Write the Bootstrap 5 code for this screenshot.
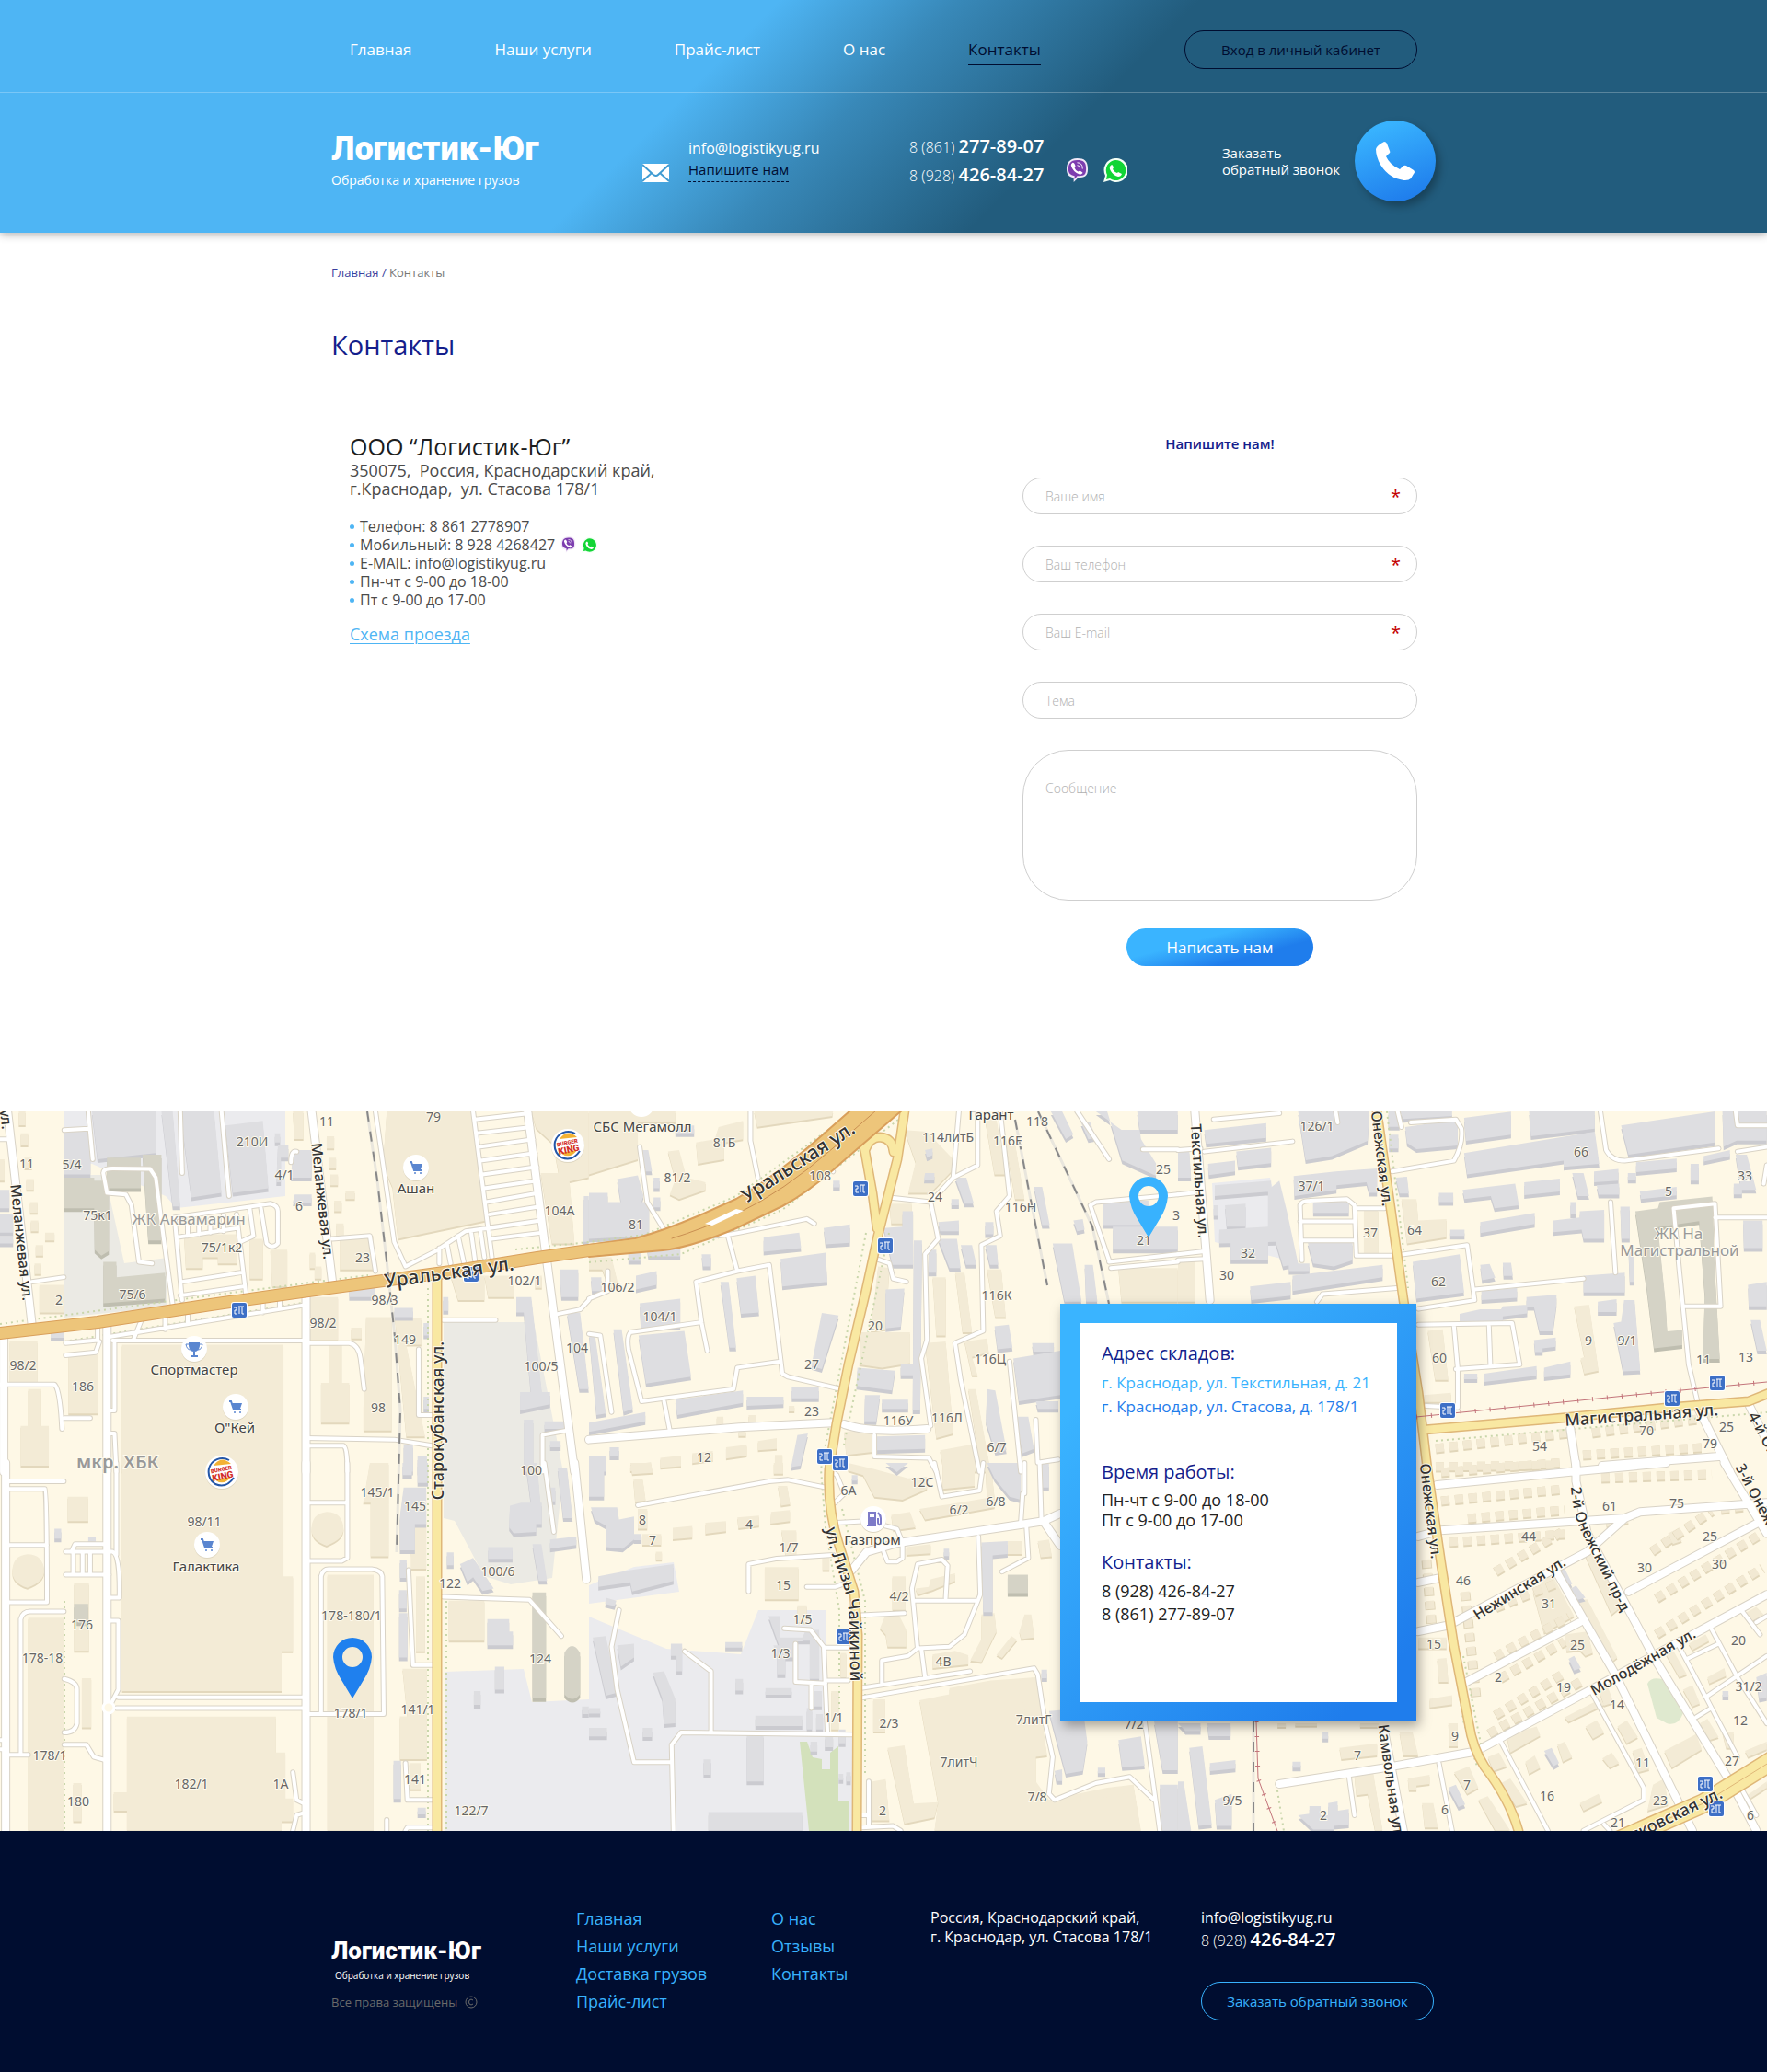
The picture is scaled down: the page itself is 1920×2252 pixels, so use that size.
<!DOCTYPE html>
<html lang="ru">
<head>
<meta charset="utf-8">
<meta name="viewport" content="width=device-width, initial-scale=1">
<title>Контакты — Логистик-Юг</title>
<link href="https://cdn.jsdelivr.net/npm/bootstrap@5.3.0/dist/css/bootstrap.min.css" rel="stylesheet">
<style>
:root{--sky:#4eb5f4;--azure:#38b2fe;--blue:#1f7dec;--navy:#000d30;--ink:#141e8c}
body{font-family:"Open Sans","Noto Sans",sans-serif;font-size:16px;line-height:20px;color:#4b4b4b;background:#fff}
a{text-decoration:none}
.wrap{width:100%;max-width:1200px;margin:0 auto}
.t13{font-size:13px;line-height:22px}
.t18{font-size:18px}
.light{font-weight:300}
.medium{font-weight:500}
.brand-name{font-family:Roboto,"Open Sans",sans-serif;font-weight:900;font-size:36px;line-height:36px;color:#fff}
.brand-name.compact{font-size:26px;line-height:30px}

.site-head{background:linear-gradient(135deg,var(--sky) 39%,#3888b8 48%,#225c7d 60%);box-shadow:0 2px 9px rgba(0,0,0,.3);position:relative;color:#fff}
.head-top{height:101px;border-bottom:1px solid rgba(255,255,255,.25)}
.head-top .wrap{padding:7px 20px 0;height:100%}
.main-menu{gap:90px}
.main-menu a{color:#fff;font-size:17px;line-height:24px;padding:5px 0 4px;border-bottom:1px solid transparent}
.main-menu a.current{color:var(--navy);border-color:var(--navy)}
.pill{width:253px;height:42px;border-radius:21px;border:1px solid var(--navy);background:transparent;color:var(--navy);font-size:15px;padding:0}
.pill.sky{border-color:var(--azure);color:var(--azure)}
.head-low .wrap{padding:30px 0 34px}
.w-brand{width:338px}
.w-mail{width:290px;padding-bottom:3px}
.tagline{font-size:14px;line-height:22px;margin-top:5px}
.mail-lines a{display:block;line-height:22px;color:#fff}
.mail-lines .ask{color:var(--navy);font-size:15px;border-bottom:1px dashed var(--navy);line-height:25px;width:max-content}
.tel{line-height:29px;color:#fff;display:block}
.tel b{font-size:20px;font-weight:600}
.call-text{font-size:15px;line-height:18px}
.call-btn{width:88px;height:88px;border:0;border-radius:50%;background:linear-gradient(160deg,var(--azure) 15%,var(--blue) 90%);box-shadow:4px 5px 10px rgba(0,0,0,.3)}

.crumbs{padding-top:32px;color:#777}
.crumbs a{color:#3a3f9e}
h1{font-size:29px;line-height:36px;font-weight:400;color:var(--ink);margin:50px 0 76px}
.firm{font-size:25px;line-height:32px;font-weight:400;color:#1d1d1d;margin:0}
.facts{list-style:none;padding:0;margin:21px 0 15px}
.facts li{display:flex;align-items:center;gap:6px}
.facts li::before{content:"";width:5px;height:5px;border-radius:50%;background:var(--sky)}
.route{color:var(--sky);font-size:18px;line-height:24px;text-decoration:underline;text-decoration-thickness:1px;text-underline-offset:3px}
.page-main{padding-bottom:158px}
.page-cols{padding:0 20px}
.write{width:429px;gap:34px}
.write h2{font-size:15px;line-height:24px;font-weight:600;color:var(--ink);margin:1px 0 -9px}
.write .form-control{height:40px;border-radius:20px;border:1px solid #cfcfcf;padding:0 24px;font-size:14px}
.write .form-control::placeholder{color:#b0b0b0;opacity:1;font-weight:300}
.write textarea.form-control{height:164px;border-radius:50px;padding-top:31px;resize:none;line-height:20px}
.star{position:absolute;right:18px;top:9px;color:#c40000;font-size:20px;line-height:24px}
.send{width:203px;height:41px;border:0;border-radius:21px;color:#fff;font-size:17px;font-weight:500;margin-top:-4px;background:linear-gradient(165deg,#3ab4ff 35%,var(--blue) 70%)}

.map{min-height:782px;position:relative;overflow:hidden;background:#fef8e6}
.map-art{position:absolute;inset:0;width:100%;height:100%}
.map .wrap{position:relative;padding:209px 21px 119px}
.stores{width:387px;padding:21px;background:linear-gradient(135deg,#3ab4ff 15%,var(--blue) 90%);box-shadow:3px 5px 12px rgba(0,0,0,.35)}
.stores-in{background:#fff;min-height:412px;padding:20px 10px 20px 24px;color:#222}
.stores h2{font-size:20px;line-height:26px;font-weight:400;color:var(--ink);margin:0 0 6px}
.stores p{font-size:18px;line-height:22px}
.stores .loose{line-height:25px}
.stores .places{font-size:17px;line-height:26px;margin-bottom:45px}
.places a{color:#38b2fe}
.places a+br+a{color:var(--blue)}
.gap-md{margin-bottom:22px}

.site-foot{background:var(--navy);color:#fff;padding:80px 0 57px}
.site-foot .links a{color:var(--azure);font-size:18px;line-height:30px;display:block}
.f1{width:266px}.f2{width:212px}.f3{width:173px}.f4{width:294px}
.f4,.f5{padding-top:4px;line-height:21px}
.f1{padding-top:35px}
.mini{font-size:10px;line-height:16px;margin:4px 0 11px 4px}
.rights{color:#6a6a6a;font-size:13px}
.f5 .tel{line-height:26px}
.f5 .pill{margin-top:32px}

.map-art path,.map-art ellipse{vector-effect:non-scaling-stroke}
.roads{fill:none;stroke-linejoin:round;stroke-linecap:round}
.num text{font:14px "Noto Sans",sans-serif;fill:#666}
.poi text{font:15px "Noto Sans",sans-serif;fill:#444}
.area text{font:17px "Noto Sans",sans-serif;fill:#999}
.area .big{font-size:20px;font-weight:600}
.street text{font:500 16px "Noto Sans",sans-serif;fill:#333}
.street .big{font-size:21px}
.street .mid{font-size:18px}
.street .from-start{text-anchor:start}
.halo{text-anchor:middle;paint-order:stroke;stroke:#fffbee;stroke-width:2px;stroke-linejoin:round}
</style>
<script src="https://cdn.jsdelivr.net/npm/bootstrap@5.3.0/dist/js/bootstrap.bundle.min.js"></script>
</head>
<body>
<svg width="0" height="0" class="position-absolute" aria-hidden="true">
  <symbol id="viber" viewBox="0 0 26 27">
    <path d="M13 0C21 0 25 3 25 12S21 22 14 22L9 27V22C3 21 1 18 1 12S4 0 13 0z" fill="#f1e8f7"/>
    <path d="M13 2C20 2 23 4 23 12S20 20 13 20L10 24V20C5 19 3 17 3 12S5 2 13 2z" fill="#7d3daf"/>
    <path d="M8 5Q10 5 11 9L10 11Q11 14 14 15L16 14Q20 16 19 17 17 19 15 18 8 15 6 8 6 6 8 5z" fill="#fff"/>
    <path d="M13 5Q19 5 19 12M13 8Q16 8 16 11" fill="none" stroke="#fff" stroke-width="1"/>
  </symbol>
  <symbol id="whatsapp" viewBox="0 0 26 26">
    <path d="M13 0a13 13 0 1 1-6 24L0 26 2 19A13 13 0 0 1 13 0z" fill="#f3fff5"/>
    <path d="M13 2a11 11 0 1 1-6 20L3 23 4 18A11 11 0 0 1 13 2z" fill="#12d535"/>
    <path d="M9 7Q10 7 11 10L10 12Q12 15 15 16L16 15 20 17Q19 20 16 20 11 19 8 14 5 9 9 7z" fill="#fff"/>
  </symbol>
</svg>

<header class="site-head">
  <div class="head-top">
    <div class="wrap d-flex align-items-center justify-content-between">
      <nav class="main-menu d-flex" aria-label="Основное меню">
        <a href="#">Главная</a><a href="#">Наши услуги</a><a href="#">Прайс-лист</a><a href="#">О нас</a><a href="#" class="current" aria-current="page">Контакты</a>
      </nav>
      <button type="button" class="pill">Вход в личный кабинет</button>
    </div>
  </div>
  <div class="head-low">
    <div class="wrap d-flex align-items-center">
      <div class="w-brand">
        <div class="brand-name">Логистик-Юг</div>
        <div class="tagline">Обработка и хранение грузов</div>
      </div>
      <div class="w-mail d-flex align-items-end">
        <svg width="50" height="20" viewBox="0 0 50 20" aria-hidden="true"><rect width="29" height="20" rx="1" fill="#fff"/><path d="M0 1L12 12Q15 14 17 12L29 1M0 19L10 10M29 19L19 10" fill="none" stroke="#3f9bd2" stroke-width="2"/></svg>
        <div class="mail-lines">
          <a href="mailto:info@logistikyug.ru" class="medium">info@logistikyug.ru</a>
          <a href="#write" class="ask">Напишите нам</a>
        </div>
      </div>
      <div class="d-flex align-items-end">
        <div>
          <a href="tel:+78612778907" class="tel"><span class="light">8 (861)</span> <b>277-89-07</b></a>
          <a href="tel:+79284268427" class="tel"><span class="light">8 (928)</span> <b>426-84-27</b></a>
        </div>
        <div class="d-flex ms-4 mb-2 gap-3">
          <a href="#" aria-label="Viber"><svg class="d-block" width="25" height="26"><use href="#viber"/></svg></a>
          <a href="#" aria-label="WhatsApp"><svg class="d-block" width="26" height="26"><use href="#whatsapp"/></svg></a>
        </div>
      </div>
      <div class="d-flex align-items-center ms-auto gap-3">
        <div class="call-text">Заказать<br>обратный звонок</div>
        <button type="button" class="call-btn" aria-label="Заказать обратный звонок">
          <svg width="42" height="42" viewBox="0 0 42 42" aria-hidden="true"><path fill="#fff" d="M9 0Q11 0 12 2L15 10Q16 12 14 13L11 16Q15 25 26 30L29 27Q31 25 33 26L41 31Q43 33 41 35L38 40Q36 42 32 42Q15 41 5 25Q0 16 0 8Q1 4 9 0z"/></svg>
        </button>
      </div>
    </div>
  </div>
</header>

<main class="page-main">
  <div class="wrap">
    <nav class="crumbs t13" aria-label="Хлебные крошки"><a href="#">Главная /</a> <span>Контакты</span></nav>
    <h1>Контакты</h1>
    <div class="page-cols d-flex justify-content-between align-items-start">
      <section>
        <h2 class="firm">ООО “Логистик-Юг”</h2>
        <address class="t18 mb-0">350075,&nbsp; Россия, Краснодарский край,<br>г.Краснодар,&nbsp; ул. Стасова 178/1</address>
        <ul class="facts">
          <li>Телефон: 8 861 2778907</li>
          <li>Мобильный: 8 928 4268427
            <svg width="17" height="18" aria-hidden="true"><use href="#viber"/></svg>
            <svg width="17" height="17" aria-hidden="true"><use href="#whatsapp"/></svg></li>
          <li>E-MAIL: info@logistikyug.ru</li>
          <li>Пн-чт с 9-00 до 18-00</li>
          <li>Пт с 9-00 до 17-00</li>
        </ul>
        <a class="route" href="#map">Схема проезда</a>
      </section>
      <form id="write" class="write d-flex flex-column">
        <h2 class="text-center">Напишите нам!</h2>
        <div class="position-relative"><label class="visually-hidden" for="f-name">Ваше имя</label><input id="f-name" class="form-control" type="text" placeholder="Ваше имя" required><span class="star" aria-hidden="true">*</span></div>
        <div class="position-relative"><label class="visually-hidden" for="f-tel">Ваш телефон</label><input id="f-tel" class="form-control" type="tel" placeholder="Ваш телефон" required><span class="star" aria-hidden="true">*</span></div>
        <div class="position-relative"><label class="visually-hidden" for="f-mail">Ваш E-mail</label><input id="f-mail" class="form-control" type="email" placeholder="Ваш E-mail" required><span class="star" aria-hidden="true">*</span></div>
        <div><label class="visually-hidden" for="f-topic">Тема</label><input id="f-topic" class="form-control" type="text" placeholder="Тема"></div>
        <div class="d-flex flex-column"><label class="visually-hidden" for="f-msg">Сообщение</label><textarea id="f-msg" class="form-control" placeholder="Сообщение"></textarea></div>
        <button type="submit" class="send align-self-center">Написать нам</button>
      </form>
    </div>
  </div>
</main>

<section class="map" id="map">
<svg class="map-art" viewBox="0 1208 1920 782" preserveAspectRatio="xMidYMid slice" role="img" aria-label="Карта складов">
  <defs>
    <!-- The city plan is stored as six tiles, three across and two down -->
    <g id="beige">
      <path transform="translate(0 1200) scale(.408 .333)" d="M1030 24L1255 24 1295 380 1060 440 1045 270 1020 200zM1415 24H1568V239L1493 259 1473 129 1428 79zM1440 225H1515L1530 455H1470zM325 785H755V1200H325zM490 425H630V520H580V500H540V535H495zM665 440h35v130h-35zM720 475h45v120h-40zM905 430h90v110h-90zM825 630h75v140h-75zM935 730h28v35h-28zM975 695h68v370h-75v-80zM875 780h35v130h-35zM855 910h75v130h-75zM182 820h80v190h-80zM25 775h75v135h-75zM75 930h35v120h-35zM55 1050h75v130h-75zM1052 700h70v85h-40l50 300h-50zM780 24h28v90h-24zM1200 560h90v80h-70zM1290 560h80v70h-70zM1425 560h18v40h-18zM920 285h25v25h-25zM870 105h20v40h-20zM875 175h20v35h-20zM880 230h20v35h-20zM890 315h20v35h-20zM895 390h20v40h-20zM50 24h18v45h-18zM55 95h20v40h-20zM65 175h20v35h-20zM70 245h20v35h-20zM80 320h20v35h-20zM82 380h20v35h-20zM95 460h20v35h-20zM92 520h18v35h-18zM120 420h25v25h-25zM105 590h65v90h-65zM825 485h14v50h-14zM838 530h18v40h-18zM0 180h12v70H0z"/>
      <path transform="translate(640 1200) scale(.408 .333)" d="M0 24H230V60H130V180L0 230zM440 24h210l-2 15-200 35zM285 125l50-10 10-40 65-20v60l-50 10v55l-70 15zM210 155l30-5 20 90 50 15v25l-70 30-25-15 15-50zM0 500h60l20 100h-25l-20-60H0zM840 85l60 5 70 90-5 40-55 70h-60l20-100zM800 325h60v65h-55zM770 530l30 5-10 200-40 5zM725 745h130v100l-75 15-60-10zM895 780l55-5 20 300-45 15zM915 565h35v190h-25zM975 550h25l20 195h-25zM1060 540h38l12 155h-28zM1055 50h30l25 180h-30zM1110 130h25l25 180h-25zM1000 775l60-10 5 45-45 15 15 60h-15zM1410 535h158v110h-150zM680 1070l75-10v75l-70 10zM935 1130l110-25 20 95h-120zM1010 930h20l40 270h-25zM450 1100l50-10v35l-50 5zM365 1120l55-8v35l-55 10zM275 1140l55-8v30l-55 10zM190 1155l55-8v35l-55 5zM110 1180l55-12v25l-55 5zM495 1145h20v55h-20zM340 1020h18v32h-18zM425 1015h20v32h-20zM398 1068h20v15h-20zM532 985h15v18h-15z"/>
      <path transform="translate(1280 1200) scale(.408 .333)" d="M595 310h40l5 70 75-5v60l-105 20zM495 345h38v145h-38zM665 740l40-5 15 165h-35zM655 950l72-8v30h-72zM1055 660l40-5 25 215-38 10-10-50 10-5zM0 500h45v145H0z"/>
      <path transform="translate(0 1590) scale(.408 .333)" d="M325 0H755V370H780V615H750V745H325zM338 828H735V945H760V1095H780V1170H750V1200H338V1135H303V1075H338zM872 365H995V1200H872zM75 505H171V1200H75zM180 110h55v80h-55zM197 393h40v220h-40zM218 703h25v160h-25zM195 1045h22v125h-22zM985 0h50v305h-48V130h-20zM1108 370h24v245h-24zM1090 190h45v155h-40v-40zM1195 450h95v130h-95zM1072 672h65v295h-72V827h20zM1090 980h30v85h-28zM870 160q42 0 45 55 0 35-45 55-42-18-40-55 0-50 40-55zM73 298q42 0 45 55 0 35-45 55-42-18-40-55 0-50 40-55z"/>
      <path transform="translate(640 1590) scale(.408 .333)" d="M468 340h90v105h-90zM110 0h55l5 32-55 5zM118 55l25-3 8 70-28 5zM130 150h25v65h-25zM142 232h50v35h-50zM223 212l52-6v38l-52 5zM310 195l55-5v33l-55 8zM395 178l58-6v33l-55 8zM485 160l50-6v36l-52 8zM492 0h25v35h-25zM503 75h25l8 60-25 5zM512 220h40v80l-28 5zM178 290h16v26h-16zM690 0l70 20 90 30 50-5v40l-65 35-75-10-30-70-40-15zM880 150l80-15 120-25v35l-185 40zM805 170l50-10 15 50-60 10zM942 0h85v75l-85 10zM1055 0h15l10 110h-20zM845 275l65-10v30l-65 5zM870 410l35-5 5-25 65-20v25l-60 30-40 15zM808 370h35v110h-35zM790 495h35l20 50v55h-50l-5-40-15-20zM915 625l60-12 35 15v30l-95 12zM1045 495l35-5 5 60-40 100-30-5 30-70zM1125 565l15 12-40 60-15-10zM1160 495h18l8 75-35 5-5-25zM1115 255h38v42h-38zM1195 255l30-5 8 55-30 3zM757 772h32v105h-32zM795 930l45-8 25 190 65-5-10 50-80 20zM755 1040l35-8 10 135h-45zM880 775L960 755V735L1070 710 1190 700 1190 960V1040L1225 1100 1380 1060 1450 1050 1470 1200H920L930 1110zM645 745h20v125h-20zM670 620h15v80h-15zM555 465h25v55h-25zM622 305h18v45h-18z"/>
      <path transform="translate(640 1590) scale(.408 .333)" d="M1145 710l45-10 30 255-35 5zM1310 1080l140-30v25l-140 30z"/>
      <path transform="translate(1280 1590) scale(.408 .333)" d="M945 420l50-60 60 140-80 55zM1060 450l30-5 80 190-20 20zM1080 290l25-5 75 185-25 25zM875 890l80-30 10 30-80 55zM1030 830l95-60 10 20-95 55zM925 975l25-20 15 40-30 20zM1010 920l20-10 20 50-25 15zM1085 860l30-20 20 40-30 20zM1130 965l25-20 20 35-25 15zM1170 860l25-20 30 55-30 20zM1295 940l85-55 15 50-80 60zM1070 1110l50-30 10 25-50 30zM1210 940l25-10 20 70-30 10zM1300 625l20-10 35 75-20 10zM1345 740l25-15 20 60-20 10zM1360 590l45-30 10 20-45 30zM1410 700l45-30 5 25-45 25zM1390 850l20-15 30 60-25 10zM1265 1050l30-20 10 85-55 20zM430 930l100-15v40l-95 12zM590 880h35l15 75h-40zM470 1020l50-8 25 188h-20l-20-120-30 5zM612 1030l58-12v30l-35 5v15h-20zM650 1110h30l12 80h-35zM735 1010l40-20 25 70-30 20zM800 1100l25-12 60 112h-40zM860 1045l25-15 45 80-30 10zM825 960l30-15 20 45-35 15zM720 850h25v75h-22zM670 770l60-12v30l-60 10zM690 640l25-3 5 78h-25zM640 570h75v35h-75zM485 850h50v12h-50zM265 850h22v12h-22zM312 850h58v8h-58zM1510 1090l58-50v20l-50 40zM1510 940l58-30v25l-50 25zM1120 740l25-8 15 50-25 10zM1030 560l60-10 15 70-20 10-15-20-35 5zM1305 230l25-15 12 40-25 10zM1510 490l30-20 20 25-30 20zM1450 880h30v50h-20z"/>
    </g>
    <g id="grey">
      <path transform="translate(0 1200) scale(.408 .333)" d="M245 24H415V160L260 180zM480 24H570L590 290 510 305zM600 70L700 55 715 275 620 290zM430 24h30l20 310h-20zM171 90h70v140h-70zM780 150h50v90h-55zM785 295h45v26h-50zM732 95h14v30h-14zM740 135h28v40h-20v80h-12zM1555 300h13v150h-15zM1385 940h80v40l-80 20zM1490 540h50v90h-45zM1375 630h40l30 330h-30l-20-280h-20zM1510 680h35l23 250h-25zM1395 1030h25v170h-25zM930 600h70v30h-70zM1050 665h50v30h-50zM1128 715h14v40h-14zM1180 630h14v45h-14zM0 280h25v60H0zM0 360h35v60H0zM0 430h35v25H0zM135 735h36v28h-36zM1450 1035h60v25h-60zM1465 1100h28v20h-28zM1075 1110h25v90h-25zM1112 1150h25v50h-25zM1128 955h14v40h-14z"/>
      <path transform="translate(640 1200) scale(.408 .333)" d="M75 245l55-12 15 65-5 22h-55zM0 290h50v30h110v110L0 440zM465 435l95-15 5 50-100 12zM510 505l120-20 5 95-120 15zM625 405l70-12v60l-65 5zM350 580h22l20 215h-18zM393 568l50-8 10 120-48 5zM125 560l55-15v45l-55 15zM135 650l108-15v90l-105 5zM132 755l122-15 18 150-120 22zM65 735h22l30 260-25 10zM0 750l15-5 30 265-25 5zM230 965l180-30v40l-175 40zM420 955h98v25l-98 5zM540 925h72v35h-72zM620 682l45 8-45 175-28-10zM785 405l50-5v-50h28v175h-55zM865 445h22l-5 555h-20zM790 605l50-3-10 125-40 5zM715 860l100 10-8 65-95-15zM735 950h40l-10 85h-32zM765 1085l130-5v45l-130 5zM1130 830l125-25v145l-110 20zM1080 725l38-5 10 75-40 5zM1185 270h22l20 125h-20zM1235 455h52l25 190h-45zM930 440h50l10 95h-30zM990 460h30l12 65h-28zM930 385l55-5v35h-50zM975 240h30l20 85h-25zM905 475h20v75h-22zM1055 385h22v40h-22zM1055 460h30l5 65h-22zM1320 525h22l12 120h-30zM1370 315h120v80h-120zM1395 400h173v75H1395zM1380 24l40 160 90 50v-40l-40-80-10-90zM1230 24h30l30 75-20 15zM1310 60h25l15 50-20 5zM1350 24h218v60h-150zM1290 380l25-5 5 35-20 5zM1060 930l22 5 30 195-30 5-25-100zM1135 1020h35l15 105-30 15zM1190 970h60v25h-55zM155 472l88-10v35h-85zM300 490h25v40h-22zM140 150h18l10 70h-20zM172 240h16v35h-16zM172 305h18v32h-18zM55 1120h25v30h-25zM0 1150h45v50H0zM0 1040l150-35v30L0 1070zM555 1080l28-5-20 105-25 5zM895 225h25v22h-28zM1180 780h58v28h-55zM5 565h28v45h-25zM105 480h32v32h-32zM230 70h50v25h-50zM650 250h18v22h-18zM895 150l20-5v22l-15 8zM780 965h70v30h-70zM830 850h40v35h-40zM965 310h20v20h-20z"/>
      <path transform="translate(1280 1200) scale(.408 .333)" d="M70 85L235 62V110L75 130zM155 155l93-12v50l-88 12zM80 195l72-10v35l-70 12zM320 24H510L505 120 410 170 340 183zM98 265l150-15v35l-150 15zM110 410l130-10V280l30-30 20 100 30 170-40 10-20-80-150 5zM125 330l55-5v75h-50zM308 235l112-15 110-10v80h-20l-8-35-80 10v15l-112 20zM360 310l95-5v50h-95zM345 450h120v60l-50 20-55-10zM140 450h100v60h-100zM305 560l240-35v40l-240 45zM295 520h55v25h-55zM192 595l108-15v45l-105 15zM560 24h30v50h-30zM605 75l140-25v85l-110 12-25-20zM590 24h140v15l-130 10zM762 45l125-20v75l-120 20zM935 24H1110V80L940 105zM762 160L1110 90l12 105-95 10v-20L770 230zM1180 70L1430 24V125L1200 165zM1450 24h118v95h-80l-35 20zM580 240l30-3 5 55h-25zM562 100h25v45h-25zM695 290h38v30h-38zM758 280l140-20 10 70-65 10-10-40-70 10zM922 255l95-12v42l-95 12zM1050 225h30l15 75h-30zM1108 220l65-8v38l-65 5zM1115 265l60-5v36h-55zM1220 190l108-12v32l-108 12zM1365 195h22v55h-22zM1230 285l98-15v28l-95 12zM1485 165h30l25 115h-40zM1480 260h22v35h-22zM805 385l145-30v36l-145 30zM1000 380l70-10v-20l65-5v95h-55l-5-30-75 8zM1178 335h25v105h-22zM1045 320h15v40h-15zM625 515L750 490 762 615 635 635zM805 525l25-3 15 45-35 8zM865 518h22l5 43h-25zM808 610l95-10v32l-95 8zM1080 560l110-10v65h-110zM1200 480h15v100h-12zM725 410h38v20h-38zM750 685l55-15h55l5-10 65-5v28l-65 10v15l-115 5zM928 630l80-8v30l-10 90h-35l-15-80h-20zM948 770l58-8v30l-35 5v12h-20zM1118 645l50-8v42h-50zM1160 715l20-5 8-70h28l15 230-45 2zM762 880h35v18h-35zM815 880l140-25v32l-140 20zM975 860l70-20v42l-70 10zM1505 380h52v90h-50zM1518 590l50-10v80h-48zM1525 705h25l18 100h-25zM0 150h30l5 90H0zM1400 170l70-20v20l-70 18zM1198 225h22v22h-22zM95 330h12v35h-12z"/>
      <path transform="translate(0 1590) scale(.408 .333)" d="M1075 80h60v120h-30v85h-40V175zM1072 0h25v40h-25zM1112 0h28v65h-28zM1065 315h18v60h-18zM1063 415h20v60h-20zM1063 490h22v145h-22zM1048 972h20v125h-20zM1112 1125h22v22h-22zM1298 510h58v40h10v45h-68zM1300 275h65v38h-65zM1318 665h25v75h-25zM1358 140l30-10h55v70h-15v25l-60 5-12-20zM1225 330l35-20 55 100-30 8-25-45-15 15zM1418 265h24l15 120h-22zM1465 250l70-10v28l-70 12zM1485 15h25l15 165h-25zM1190 292h18v42h-18zM1262 745h18v45h-18zM1400 0h30l10 140h-25zM145 215h18v32h-18zM235 243h20v18h-20zM1465 80h14v45h-14zM1550 795h18v25h-18z"/>
      <path transform="translate(640 1590) scale(.408 .333)" d="M0 0h40v110H0zM5 145h70l5 40 40-10v75l-30 30-45-5v-70l-30-20zM25 370l85-20 115-20v55l-110 35-5-30-85 15zM45 440l28 10-5 18-25-8zM10 570l35-5 30 185-30 10zM75 595l45-5v45l-35 30zM170 685l30-5 30 90v80l-30 3-5-85zM218 590h30v90h-15v-50h-15zM390 705h20v38h-20zM470 735h70v22h-70zM363 585h45v18h-45zM443 825h125v34h-125zM420 885h45v155h-45zM0 800h30v18H0zM0 865h48v28H0zM143 865h25v30h-25zM478 500h30v70h60l10-25h35v160h-25V580h-40v55h-25v55h-22v-60l-10-35h15zM305 968h20v50h-20zM318 1140h250v60h-250zM600 745h20v50h-20zM580 800h14v70h-14zM605 820h18v50h-18zM590 910h18v32h-18zM628 890h22v38h-22zM665 870h18v45h-18zM665 1015h12v20h-12zM685 1010h12v30h-12zM1045 260l70-5v42l-40 5v185h-25zM1060 0h90v120l-30-10-40-60zM1205 0h20v80h-20zM1225 810l90-10 12 110-12 95-45 10zM1410 905l60-12 10 95-60 5zM1505 843h63v160h-40zM1520 1050h48v150h-45zM1355 995h20v18h-20zM1240 1005l20-5v38h-15zM700 40h15v18h-15zM120 232h20v20h-20zM790 0h60l-30 30zM1205 675h15v28h-15zM945 280h14v24h-14z"/>
      <path transform="translate(1280 1590) scale(.408 .333)" d="M0 850h60v25H20zM78 850h62v42H82zM30 930l35-5 25 255-35 5zM85 980l68-10v28l-68 8zM98 1100l45-20v105h-40zM320 1150l30-5v-25h30v30h20v-40l25-5v30l30-5v50l-40 5v12h-55zM0 1040h15l20 160H0zM975 940l20-10 20 50-15 10zM720 1060l20-10 25 65-18 8zM1040 415l20-15 25 40-30 10zM1015 350l15-5 20 50-20 8zM305 975h22v20h-22zM385 880h15v20h-15zM1040 640l15-10 18 40-18 8zM1450 745h16v18h-16zM1540 700l28-15v80l-20 5z"/>
    </g>
    <g id="olive">
      <path transform="translate(0 1200) scale(.408 .333)" d="M285 175h90v100h-90zM380 165h50v280h-35zM250 250h40v230l-20 15-18-20zM171 240h80v100h-80zM275 515h35v50l130-15v85l-165 15z"/>
      <path transform="translate(0 1590) scale(.408 .333)" d="M1418 423h36v345h-36zM1503 620q20-45 42 0v135q-20 30-42 0zM197 460h38v60h-38z"/>
      <path transform="translate(640 1590) scale(.408 .333)" d="M1115 365h54v60h-54z"/>
      <path transform="translate(1280 1200) scale(.408 .333)" d="M1218 350l60-10 5-20 140-18 5 200 15 330h-45l5-210-15-240-110 20 20 240 5 100 40-5v50l-75 10-20-200z"/>
    </g>
    <g id="lanes">
      <path transform="translate(0 1200) scale(.408 .333)" d="M235 24L247 180M1000 24L1050 450 1080 530 1160 480 1240 415 1440 380M1260 24L1310 500M1265 50L1410 30M1270 95L1415 75M1275 140L1420 115M1280 185L1425 160M1285 230L1430 205M1290 275L1430 250M1295 320L1435 290M1305 360L1435 335M1305 405L1440 380M1310 440L1440 420M1170 470V520M1190 455L1200 520M1220 430L1235 515M1255 420L1265 510M1280 415L1290 500M275 225Q275 210 300 210L400 212 415 240 435 430 460 655M275 225L285 290 335 295 350 330 370 515 405 520M465 370L720 325Q740 330 740 350V455Q725 475 710 455L695 340M665 340L675 430 640 450M470 435L630 405M630 360L655 620M465 370L485 640M485 580L640 550M480 625L650 595M500 385V430M530 380V425M560 375V420M595 365V415M290 760L815 655M300 772H815M375 710L355 770M440 695V735M500 690V715M700 640V680M745 635V665M815 780H930Q955 785 960 830L970 930M815 1090L1050 1095 1150 1115M815 1115H915Q925 1120 925 1200M175 780L260 770V720M305 780V1000H285M175 820L255 810 265 775M285 1075H305L310 1200M1115 800V1015H1150M0 915H145Q160 930 165 1060M1180 705H1320M1445 1200V1080L1510 1065M1485 685L1545 670 1568 640M885 440L985 430 1000 545M480 24L485 225M590 24L610 300M171 85L235 80M171 1025H240M85 580L170 565M0 115H25M775 190Q775 150 790 155"/>
      <path transform="translate(640 1200) scale(.408 .333)" d="M430 24V120L450 240M135 140L155 320 205 420M305 420Q310 440 400 420L580 375 600 390M370 430L395 545M315 805L300 715 285 580 395 545 480 525 515 880 530 890 670 930M300 712L110 745Q100 760 105 800L140 970 385 930 395 860 510 840M200 970L215 1065M800 305L910 320 930 440 895 490 900 770 885 830 910 1050M910 320L970 240 1035 200V24M985 24L970 240M1095 24L1120 300 1085 350 1095 430 1045 460 1050 740 975 780 990 900 1040 1200M765 505L800 520 810 570 845 580M1385 510L1335 330 1350 320 1568 295M1385 515L1568 490M1390 535L1568 515M1300 24L1385 180M1475 148H1568M760 1080V1150L905 1155 925 1200M0 750L30 755 60 1005M0 635L50 610V545M1120 840L1150 1200M1190 1030L1195 1170 1250 1160M620 180L650 220"/>
      <path transform="translate(1280 1200) scale(.408 .333)" d="M70 155L305 122M0 150L60 145M0 295L40 290M0 490L75 480M0 510L70 505M95 50L270 30M420 24L425 60M330 510L325 330Q330 315 350 315L450 310 470 330 475 495 575 495 770 460 790 640 640 668M325 383H470M330 445H470M470 340H550M585 24L595 75M620 60L740 50 755 80Q760 130 735 185L570 220M1125 24L1140 150Q1155 185 1190 185L1440 145M1152 320L1165 550M790 605L1080 570M370 645L385 620 590 600M640 720L890 715 910 850 740 865M735 725L745 865V990L660 985M828 725L832 855M1430 370H1568M1320 340L1430 325 1445 660H1350M1320 340L1335 540 1360 850 1385 980M1485 24L1490 70H1568M1490 155L1568 140M1568 200L1560 260"/>
      <path transform="translate(0 1590) scale(.408 .333)" d="M310 0V300M175 290H300Q320 300 318 440H285M190 290L200 265H285M195 290V365M220 290V365M240 290V365M175 365H290M285 515H315V740L290 800M315 765H815M310 800H815M15 60H170M15 85H120Q125 90 125 455H15M15 268H125M55 950V510Q60 485 80 485H170M15 953H75M815 130H920M925 0V310L910 320H815M855 815V370Q860 347 875 347H990Q1015 350 1018 370L1022 820H815M1088 350L1100 660H1155M1180 437L1410 447 1495 565M1450 0L1475 225M1080 980L1085 1100H1155M171 705Q205 715 205 740V850Q200 880 171 880M171 920H230L250 960 280 970M780 1010L790 1100 815 1115M815 1140L790 1150 780 1200M1030 1165V1200M1080 1200L1085 1190H1155M0 935H15M0 905H15"/>
      <path transform="translate(640 1590) scale(.408 .333)" d="M130 138L480 60 530 55 630 80M425 420V330L500 312 650 300M580 405H655L690 390M655 130L680 100 660 40 650 30M660 195L740 190 820 215 835 260V310L820 322H795L785 290M920 0L940 110 1040 90 1050 0M1155 100L1150 190M1160 0V100M1200 0L1205 190M1165 210L1170 310 1100 355M1037 240L1042 430 1000 560 960 600 875 605 860 410 875 330 940 315 955 335 950 440M870 450H1030M780 720V645L850 630 875 605M885 605L895 700M725 735L1015 680M725 767L1185 670 1195 690 1215 850 1235 960 1225 1080 1240 1100 1350 1045 1440 1025 1505 1100M1480 843L1520 1200M725 497L840 490M225 1200L220 920 245 880 700 887M220 977H120L75 740 60 600 80 480M325 875V680L255 615M520 540L590 545 625 600 635 880M630 603H690M550 590V715L630 720M592 720V800M635 710H690M725 1150H745M745 1040V1180M725 1190L810 1185 830 1200"/>
      <path transform="translate(1280 1590) scale(.408 .333)" d="M1100 745L1240 1060V1100L1080 1200M860 910L985 1200M695 980L730 1200M455 1020L470 1150M1355 640L1440 590M1335 600L1490 960M1380 830L1420 800M1405 765L1568 630M1420 540L1490 700 1568 850M1500 480L1550 560M1135 1180L1150 1200M1490 1040L1540 1150M1540 520L1568 500"/>
    </g>
    <g id="streets">
      <path transform="translate(0 1200) scale(.408 .333)" d="M20 24L85 720M830 24L885 580M1405 24L1455 500 1530 1200M285 725V1200M815 625V1200M10 760V1200"/>
      <path transform="translate(640 1200) scale(.408 .333)" d="M0 1095L400 1055 650 1040M680 1045Q750 1075 900 1060"/>
      <path transform="translate(1280 1200) scale(.408 .333)" d="M45 24L85 640M1520 980L1568 1100M1380 980L1470 1200M1045 1060L1062 1200M1130 1180L1440 1150"/>
      <path transform="translate(0 1590) scale(.408 .333)" d="M285 0V1200M815 0V1200M15 0V1200M1530 0L1562 380"/>
      <path transform="translate(640 1590) scale(.408 .333)" d="M700 350L740 290 820 262 1210 190 1255 165M1210 190L1255 270"/>
      <path transform="translate(1280 1590) scale(.408 .333)" d="M690 72L1058 28 1300 0M640 240L700 220 1190 180 1230 160 1568 130M1060 0V60L1090 230 1240 570 1270 640 1480 1060 1540 1200M720 530L1090 290 1190 180M640 550L720 530M760 720L1070 520M640 390L700 375M1010 360L1160 680 1370 1200M1200 420L1568 180M810 930L1100 740 1250 640 1568 430M270 1048L550 995 800 940M1455 0L1568 230M550 880L600 1200"/>
    </g>
    <path id="ural" d="M0 1449L106 1437 229 1418 335 1403 490 1382 584 1367 640 1359 700 1352"/>
    <path id="ural-wide" d="M640 1353L690 1346Q720 1338 760 1321L800 1303Q845 1277 900 1228L932 1200H988L915 1263Q880 1295 850 1311L800 1335Q750 1356 720 1359L640 1366z"/>
    <path id="rows" d="M1560 1574L1705 1557M1730 1557L1860 1540M1560 1594L1690 1592M1720 1581L1850 1573M1566 1600L1700 1589M1566 1631L1700 1618M1740 1606L1860 1602M1595 1650L1700 1641M1575 1676L1700 1667M1625 1708L1700 1663M1625 1747L1700 1717M1625 1800L1705 1757M1630 1824L1700 1784M1618 1884L1720 1826M1625 1864L1700 1818M1800 1737L1910 1669M1800 1776L1915 1704M1795 1686L1860 1642M1745 1655L1775 1650M1592 1730L1604 1845M1550 1695L1556 1770M1870 1640L1915 1635"/>
    <g id="minor">
      <path d="M984 1200L975 1260 954 1343 940 1407 922 1483 909 1547 901 1597Q899 1640 911 1677L928 1730 932 1777 931 1990M926 1237Q938 1240 940 1252L948 1297 953 1335M940 1250Q945 1236 956 1236 970 1237 971 1252"/>
      <path d="M475 1388V1990M1495 1200L1511 1313 1525 1413 1541 1513 1551 1597 1566 1700 1580 1790 1596 1873Q1600 1900 1613 1920 1640 1955 1650 1990"/>
      <path d="M1547 1554L1688 1542 1811 1530 1900 1523 1925 1513"/>
    </g>
    <symbol id="stop" viewBox="0 0 18 18"><rect width="18" height="18" rx="3" fill="#fff"/><rect x="1" y="1" width="16" height="16" rx="2" fill="#3d6fc6"/><path d="M8 5H14M9 5V13M12 5V13H14M3 6H6V9H4V13H7" fill="none" stroke="#fff" stroke-width="1"/></symbol>
    <symbol id="cart" viewBox="0 0 30 30"><circle cx="15" cy="16" r="14" fill="#ded6c0"/><circle cx="15" cy="15" r="14" fill="#fff"/><path d="M8 9H10L13 18H21" fill="none" stroke="#5a86d0" stroke-width="2"/><path d="M11 11H22L20 17H13z" fill="#5a86d0"/><circle cx="14" cy="21" r="1" fill="#5a86d0"/><circle cx="20" cy="21" r="1" fill="#5a86d0"/></symbol>
    <symbol id="burger" viewBox="0 0 38 38"><circle cx="19" cy="20" r="18" fill="#ded6c0"/><circle cx="19" cy="19" r="18" fill="#fff"/><path d="M27 6A15 15 0 0 0 5 15Q3 26 12 32 24 37 32 25" fill="none" stroke="#2457a8" stroke-width="2"/><path d="M10 12Q18 0 29 10zM11 27Q21 35 29 24z" fill="#f3b234"/><g transform="rotate(-12 19 19)" fill="#d32f2a" font-family="Roboto" font-weight="900" text-anchor="middle"><text x="19" y="18" font-size="6">BURGER</text><text x="19" y="27" font-size="10">KING</text></g></symbol>
    <symbol id="pin" viewBox="0 0 42 66"><path fill-rule="evenodd" d="M21 0A21 21 0 0 1 42 21Q41 34 33 46L21 66 9 46Q1 34 0 21A21 21 0 0 1 21 0zM21 10A11 11 0 1 0 21 32A11 11 0 1 0 21 10z"/></symbol>
    <path id="lizy" d="M897 1661Q901 1685 911 1708 922 1735 923 1765L925 1880"/>
    <path id="onezh2" d="M1707 1616Q1709 1650 1722 1672L1775 1780"/>
  </defs>

  <rect y="1208" width="1920" height="782" fill="#fef8e6"/>
  <g fill="#ebebee">
    <path d="M70 1208H310V1300L192 1313 180 1300 100 1265 70 1260z"/>
    <path d="M640 1757L724 1792 805 1798 824 1750H897L901 1883 926 1887V1990H484V1817L569 1814 578 1850 640 1847z"/>
    <path d="M640 1743L738 1730 732 1698 689 1703 640 1723zM1317 1286L1380 1280 1400 1370 1320 1350z"/>
  </g>
  <g fill="#ebeae4">
    <path d="M70 1277H114L135 1373 182 1367V1420L70 1432zM482 1437H580L612 1600 600 1715 555 1722 526 1713 494 1653 482 1650z"/>
  </g>
  <path d="M869 1893H877L883 1910 893 1912V1923H902V1905L911 1898V1958H922V1990H879z" fill="#d3e1bb"/>
  <path d="M1790 1830Q1794 1822 1806 1825L1829 1862Q1823 1877 1811 1873L1800 1867z" fill="#dfe9cf"/>
  <use href="#beige" y="2" fill="#e3d8bd"/><use href="#beige" fill="#f3ebd6"/>
  <use href="#grey" y="4" fill="#cbcbd0"/><use href="#grey" fill="#dedee1"/>
  <use href="#olive" y="4" fill="#bfbeb0"/><use href="#olive" fill="#d5d3c6"/>
  <g fill="none" stroke-dasharray="9 6">
    <use href="#rows" y="1" stroke="#e1d6ba" stroke-width="11"/>
    <use href="#rows" stroke="#f2e9d3" stroke-width="9"/>
  </g>
  <g fill="none" stroke="#c9d6ab" stroke-width="2" stroke-dasharray="2 4">
    <path d="M0 1439L229 1408 400 1386M70 1458L335 1415M560 1358L640 1350 700 1342 800 1300 932 1205M640 1372L740 1363 850 1315 985 1210M465 1400V1990M485 1740V1990M941 1340L892 1597 897 1660 912 1750V1870M966 1340L917 1570M915 1640L940 1740V1930M1540 1520L1590 1870 1605 1920M1590 1800L1612 1910M1560 1566L1920 1535M1387 1940L1395 1990M70 1740V1990M1507 1208L1530 1400"/>
  </g>
  <g class="roads">
    <g stroke="#d9d3c6"><use href="#lanes" stroke-width="6"/><use href="#streets" stroke-width="10"/></g>
    <g stroke="#fff"><use href="#lanes" stroke-width="4"/><use href="#streets" stroke-width="8"/></g>
    <g><use href="#minor" stroke="#dfb778" stroke-width="11"/><use href="#minor" stroke="#f9e8a2" stroke-width="8"/>
      <path d="M1760 2000L1851 1960 1925 1914" stroke="#dfb778" stroke-width="22"/><path d="M1760 2000L1851 1960 1925 1914" stroke="#f9e8a2" stroke-width="19"/><path d="M1760 2000L1851 1960 1925 1914" stroke="#dfb778" stroke-width="1"/>
      <use href="#ural" stroke="#d99f5b" stroke-width="14"/><use href="#ural-wide" stroke="#d99f5b" stroke-width="2" fill="#edc57a"/><use href="#ural" stroke="#edc57a" stroke-width="12"/>
      <path d="M730 1346Q760 1337 803 1318 850 1296 905 1248L960 1200" stroke="#c98f52" stroke-width="1"/></g>
    <path d="M766 1330L800 1314 808 1316 774 1332z" fill="#fff"/>
    <path d="M1539 1540L1786 1515 1920 1502M1365 1871L1367 1933 1388 1990" stroke="#c3747a" stroke-width="1"/>
    <path d="M1539 1540L1786 1515 1920 1502M1365 1871L1367 1933 1388 1990" stroke="#c3747a" stroke-width="5" stroke-dasharray="1 15" stroke-linecap="butt"/>
    <g stroke-linecap="butt"><path d="M399 1208L410 1283 422 1387 429 1453 435 1533 431 1687M1103 1217L1138 1397M1128 1208L1187 1333 1205 1417M1362 1871V1990" stroke="#e9e6dd" stroke-width="3"/><path d="M399 1208L410 1283 422 1387 429 1453 435 1533 431 1687M1103 1217L1138 1397M1128 1208L1187 1333 1205 1417M1362 1871V1990" stroke="#888" stroke-width="2" stroke-dasharray="11 11"/></g>
  </g>
  <circle cx="118" cy="1856" r="6" fill="#fef8e6" stroke="#fff" stroke-width="3"/>

  <g class="num halo">
    <text x="471" y="1219">79</text><text x="355" y="1224">11</text><text x="29" y="1270">11</text><text x="274" y="1246">210И</text><text x="78" y="1271">5/4</text><text x="309" y="1282">4/1</text><text x="325" y="1316">6</text><text x="106" y="1326">75к1</text><text x="608" y="1321">104А</text><text x="241" y="1361">75/1к2</text><text x="394" y="1372">23</text><text x="144" y="1412">75/6</text><text x="64" y="1418">2</text><text x="570" y="1397">102/1</text><text x="418" y="1418">98/3</text><text x="351" y="1443">98/2</text><text x="440" y="1461">149</text><text x="25" y="1489">98/2</text><text x="90" y="1512">186</text><text x="411" y="1535">98</text><text x="588" y="1490">100/5</text><text x="627" y="1470">104</text><text x="577" y="1603">100</text>
    <text x="787" y="1247">81Б</text><text x="736" y="1285">81/2</text><text x="891" y="1283">108</text><text x="691" y="1336">81</text><text x="1030" y="1241">114литБ</text><text x="1127" y="1224">118</text><text x="1095" y="1245">116Е</text><text x="1016" y="1306">24</text><text x="1109" y="1317">116Н</text><text x="1264" y="1276">25</text><text x="1243" y="1353">21</text><text x="1278" y="1326">3</text><text x="671" y="1404">106/2</text><text x="717" y="1436">104/1</text><text x="1083" y="1413">116К</text><text x="951" y="1446">20</text><text x="882" y="1488">27</text><text x="1076" y="1482">116Ц</text><text x="882" y="1539">23</text><text x="976" y="1549">116У</text><text x="1029" y="1546">116Л</text><text x="1083" y="1578">6/7</text><text x="765" y="1589">12</text>
    <text x="1431" y="1229">126/1</text><text x="1718" y="1257">66</text><text x="1896" y="1283">33</text><text x="1813" y="1300">5</text><text x="1425" y="1294">37/1</text><text x="1489" y="1345">37</text><text x="1537" y="1342">64</text><text x="1356" y="1367">32</text><text x="1333" y="1391">30</text><text x="1563" y="1398">62</text><text x="1726" y="1462">9</text><text x="1768" y="1462">9/1</text><text x="1564" y="1481">60</text><text x="1851" y="1483">11</text><text x="1897" y="1480">13</text><text x="1789" y="1560">70</text><text x="1876" y="1556">25</text><text x="1673" y="1577">54</text><text x="1858" y="1574">79</text>
    <text x="410" y="1627">145/1</text><text x="451" y="1642">145</text><text x="222" y="1659">98/11</text><text x="541" y="1713">100/6</text><text x="489" y="1726">122</text><text x="89" y="1771">176</text><text x="382" y="1761">178-180/1</text><text x="587" y="1808">124</text><text x="46" y="1807">178-18</text><text x="381" y="1867">178/1</text><text x="54" y="1913">178/1</text><text x="454" y="1863">141/1</text><text x="451" y="1939">141</text><text x="208" y="1944">182/1</text><text x="305" y="1944">1А</text><text x="85" y="1963">180</text><text x="512" y="1973">122/7</text>
    <text x="1002" y="1616">12С</text><text x="922" y="1625">6А</text><text x="1082" y="1637">6/8</text><text x="1042" y="1646">6/2</text><text x="698" y="1657">8</text><text x="814" y="1662">4</text><text x="709" y="1679">7</text><text x="857" y="1687">1/7</text><text x="851" y="1728">15</text><text x="977" y="1740">4/2</text><text x="872" y="1765">1/5</text><text x="848" y="1802">1/3</text><text x="1025" y="1811">4В</text><text x="906" y="1872">1/1</text><text x="966" y="1878">2/3</text><text x="1123" y="1874">7литГ</text><text x="1232" y="1879">7/2</text><text x="1042" y="1920">7литЧ</text><text x="1127" y="1958">7/8</text><text x="959" y="1973">2</text>
    <text x="1749" y="1642">61</text><text x="1822" y="1639">75</text><text x="1661" y="1675">44</text><text x="1858" y="1675">25</text><text x="1590" y="1723">46</text><text x="1787" y="1709">30</text><text x="1868" y="1705">30</text><text x="1683" y="1748">31</text><text x="1558" y="1792">15</text><text x="1714" y="1793">25</text><text x="1889" y="1788">20</text><text x="1628" y="1828">2</text><text x="1699" y="1839">19</text><text x="1757" y="1858">14</text><text x="1900" y="1838">31/2</text><text x="1891" y="1875">12</text><text x="1581" y="1892">9</text><text x="1475" y="1913">7</text><text x="1594" y="1945">7</text><text x="1785" y="1921">11</text><text x="1882" y="1919">27</text><text x="1681" y="1957">16</text><text x="1804" y="1962">23</text><text x="1339" y="1962">9/5</text><text x="1438" y="1978">2</text><text x="1570" y="1972">6</text><text x="1758" y="1986">21</text><text x="1902" y="1978">6</text>
  </g>
  <g class="area halo"><text x="205" y="1331">ЖК Аквамарин</text><text x="1824" y="1347">ЖК На</text><text x="1825" y="1365">Магистральной</text><text x="128" y="1596" class="big">мкр. ХБК</text></g>

  <g>
    <use href="#stop" x="251" y="1415" width="18" height="18"/><use href="#stop" x="503" y="1376" width="18" height="18"/><use href="#stop" x="926" y="1283" width="18" height="18"/><use href="#stop" x="953" y="1345" width="18" height="18"/><use href="#stop" x="887" y="1574" width="18" height="18"/><use href="#stop" x="904" y="1581" width="18" height="18"/><use href="#stop" x="1564" y="1524" width="18" height="18"/><use href="#stop" x="1808" y="1511" width="18" height="18"/><use href="#stop" x="1857" y="1494" width="18" height="18"/><use href="#stop" x="908" y="1770" width="18" height="18"/><use href="#stop" x="1844" y="1930" width="18" height="18"/><use href="#stop" x="1856" y="1957" width="18" height="18"/>
    <use href="#cart" x="437" y="1254" width="30" height="30"/><use href="#cart" x="241" y="1514" width="30" height="30"/><use href="#cart" x="210" y="1664" width="30" height="30"/>
    <use href="#burger" x="598" y="1226" width="38" height="38"/><use href="#burger" x="222" y="1581" width="38" height="38"/>
    <circle cx="211" cy="1467" r="14" fill="#ded6c0"/><circle cx="211" cy="1466" r="14" fill="#fff"/><path d="M205 1459H217V1463Q216 1469 211 1469 206 1469 205 1463zM210 1468H212V1473H215V1475H207V1473H210z" fill="#5a86d0"/><path d="M205 1461H202Q203 1467 207 1467M217 1461H220Q219 1467 215 1467" fill="none" stroke="#5a86d0" stroke-width="1"/>
    <circle cx="949" cy="1652" r="14" fill="#ded6c0"/><circle cx="949" cy="1651" r="14" fill="#fff"/><path d="M943 1643H952V1659H942V1657H943zM945 1645V1649H950V1645z" fill="#7d7bc8" fill-rule="evenodd"/><path d="M954 1644Q957 1647 957 1650V1656Q955 1659 954 1655V1650" fill="none" stroke="#7d7bc8" stroke-width="2"/>
    <circle cx="697" cy="1200" r="14" fill="#fff"/>
  </g>
  <g class="poi halo"><text x="452" y="1297">Ашан</text><text x="211" y="1494">Спортмастер</text><text x="255" y="1557">О"Кей</text><text x="224" y="1708">Галактика</text><text x="698" y="1230">СБС Мегамолл</text><text x="1077" y="1217">Гарант</text><text x="948" y="1679">Газпром</text></g>
  <g class="street halo">
    <text class="big" transform="translate(489 1390) rotate(-8)">Уральская ул.</text>
    <text class="big" transform="translate(871 1269) rotate(-33)">Уральская ул.</text>
    <text transform="translate(18 1351) rotate(84)">Меланжевая ул.</text>
    <text transform="translate(345 1306) rotate(84)">Меланжевая ул.</text>
    <text transform="translate(1 1217) rotate(84)">ул.</text>
    <text class="mid" transform="translate(482 1544) rotate(-90)">Старокубанская ул.</text>
    <text transform="translate(1298 1284) rotate(86)">Текстильная ул.</text>
    <text transform="translate(1496 1260) rotate(83)">Онежская ул.</text>
    <text transform="translate(1549 1643) rotate(83)">Онежская ул.</text>
    <text class="mid" transform="translate(1784 1544) rotate(-4)">Магистральная ул.</text>
    <text transform="translate(1654 1731) rotate(-32)">Нежинская ул.</text>
    <text transform="translate(1788 1811) rotate(-30)">Молодёжная ул.</text>
    <text transform="translate(1506 1936) rotate(82)">Камвольная ул.</text>
    <text transform="translate(1920 1660) rotate(62)">3-й Онежский пр-д</text>
    <text transform="translate(1934 1604) rotate(62)">4-й Онежский пр-д</text>
    <text class="mid" transform="translate(1812 1983) rotate(-26)">Московская ул.</text>
    <text class="mid from-start"><textPath href="#lizy">ул. Лизы Чайкиной</textPath></text>
    <text class="from-start"><textPath href="#onezh2">2-й Онежский пр-д</textPath></text>
  </g>
  <use href="#pin" x="1227" y="1279" width="42" height="66" fill="#38b2fe"/>
  <use href="#pin" x="362" y="1780" width="42" height="66" fill="#1f80ee"/>
</svg>
  <div class="wrap">
    <div class="stores ms-auto">
      <div class="stores-in">
        <h2>Адрес складов:</h2>
        <p class="places"><a href="#map">г. Краснодар, ул. Текстильная, д. 21</a><br><a href="#map">г. Краснодар, ул. Стасова, д. 178/1</a></p>
        <h2>Время работы:</h2>
        <p class="gap-md">Пн-чт с 9-00 до 18-00<br>Пт с 9-00 до 17-00</p>
        <h2>Контакты:</h2>
        <p class="loose mb-0">8 (928) 426-84-27<br>8 (861) 277-89-07</p>
      </div>
    </div>
  </div>
</section>

<footer class="site-foot">
  <div class="wrap d-flex align-items-start">
    <div class="f1">
      <div class="brand-name compact">Логистик-Юг</div>
      <div class="mini">Обработка и хранение грузов</div>
      <div class="rights d-flex align-items-center gap-2">Все права защищены <svg width="14" height="14" viewBox="0 0 14 14" fill="none" stroke="#6a6a6a" aria-hidden="true"><circle cx="7" cy="7" r="6"/><path d="M9 5Q7 3 5 5 4 7 5 9 7 11 9 9"/></svg></div>
    </div>
    <nav class="links f2" aria-label="Разделы"><a href="#">Главная</a><a href="#">Наши услуги</a><a href="#">Доставка грузов</a><a href="#">Прайс-лист</a></nav>
    <nav class="links f3" aria-label="О компании"><a href="#">О нас</a><a href="#">Отзывы</a><a href="#">Контакты</a></nav>
    <div class="f4 medium">Россия, Краснодарский край,<br>г. Краснодар, ул. Стасова 178/1</div>
    <div class="f5">
      <a class="medium text-white d-block" href="mailto:info@logistikyug.ru">info@logistikyug.ru</a>
      <a href="tel:+79284268427" class="tel"><span class="light">8 (928)</span> <b>426-84-27</b></a>
      <button type="button" class="pill sky">Заказать обратный звонок</button>
    </div>
  </div>
</footer>
</body>
</html>
